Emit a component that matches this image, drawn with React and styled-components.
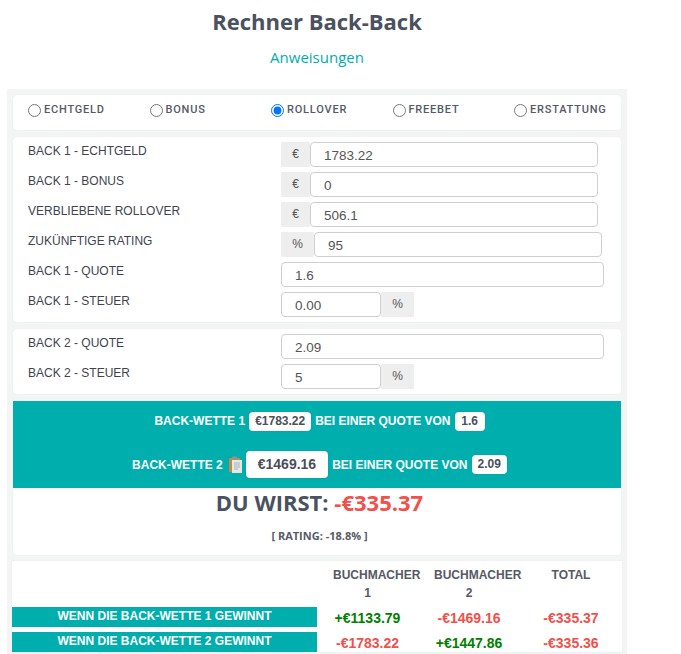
import React from 'react';
import styled, { createGlobalStyle } from 'styled-components';

const GlobalStyle = createGlobalStyle`
  html, body {
    margin: 0;
    padding: 0;
    background: #fff;
    overflow: hidden;
  }
  body {
    font-family: 'Liberation Sans', Arial, sans-serif;
  }
`;

const TEAL = '#00aeae';

const Page = styled.div`
  width: 681px;
  height: 654px;
  overflow: hidden;
`;

const Header = styled.header`
  width: 634px;
  text-align: center;
  padding-top: 5px;
  height: 89px;
  box-sizing: border-box;
`;

const Title = styled.h1`
  margin: 0;
  font: 700 22px/32px 'Open Sans', sans-serif;
  color: #4a5160;
`;

const Instructions = styled.a`
  display: block;
  margin-top: 10px;
  font: 400 15px/20px 'Open Sans', sans-serif;
  color: ${TEAL};
`;

const Panel = styled.main`
  width: 620px;
  margin-left: 7px;
  padding: 6px 6px 2px;
  box-sizing: border-box;
  background: #f3f4f4;
  display: flex;
  flex-direction: column;
  gap: 7px;
`;

const Card = styled.section`
  background: #fff;
  border-radius: 4px;
  box-shadow: 0 0 1px rgba(0, 0, 0, 0.08);
`;

const RadioCard = styled(Card)`
  height: 35px;
  display: grid;
  grid-template-columns: repeat(5, 121.5px);
  padding-left: 15px;
  align-items: center;
`;

const RadioLabel = styled.label`
  display: flex;
  align-items: center;
  gap: 3px;
  font: 500 11px/14px 'Roboto', sans-serif;
  letter-spacing: 0.8px;
  color: #555a64;
  margin-top: -5px;
`;

const Radio = styled.input`
  width: 13px;
  height: 13px;
  margin: 0;
  accent-color: #0075ff;
`;

const FieldCard = styled(Card)`
  padding: 5px 0 5px 15px;
  display: flex;
  flex-direction: column;
  gap: 5px;
`;

const Row = styled.div`
  display: flex;
  height: 25px;
`;

const Label = styled.div`
  width: 253px;
  font-size: 12px;
  line-height: 14px;
  color: #3f4450;
  padding-top: 2px;
`;

const Control = styled.div`
  display: flex;
  width: ${(p) => p.$width}px;
`;

const Addon = styled.span`
  width: ${(p) => p.$width}px;
  flex: none;
  box-sizing: border-box;
  background: #eeeeee;
  color: #555;
  font-size: 12px;
  line-height: 25px;
  text-align: center;
  border-radius: 1px;
`;

const Input = styled.input`
  flex: 1;
  min-width: 0;
  height: 25px;
  box-sizing: border-box;
  margin: 0;
  padding: 1px 0 0 13px;
  border: 1px solid #cfcfcf;
  border-radius: 4px;
  font: 13.5px 'Liberation Sans', Arial, sans-serif;
  color: #555;
  background: #fff;
  outline: none;
`;

const ResultCard = styled(Card)`
  height: 154px;
  margin-bottom: -1px;
  text-align: center;
`;

const Banner = styled.div`
  height: 87px;
  background: ${TEAL};
  color: #fff;
  font-size: 12px;
  font-weight: 700;
  display: flex;
  flex-direction: column;
`;

const BetLine = styled.div`
  height: ${(p) => p.$height}px;
  padding-left: 5px;
  display: flex;
  align-items: center;
  justify-content: center;
  gap: 4px;
`;

const Chip = styled.span`
  box-sizing: border-box;
  background: #fff;
  color: #4a4f5a;
  border-radius: 4px;
  padding: 0 ${(p) => (p.$big ? 12 : 6)}px;
  min-width: 30px;
  font-size: ${(p) => (p.$big ? 14 : 12)}px;
  line-height: ${(p) => (p.$big ? 27 : 19)}px;
  box-shadow: 0 0 1px rgba(0, 0, 0, 0.2);
`;

const Outcome = styled.div`
  font: 700 22px/30px 'Open Sans', sans-serif;
  color: #4a5160;
  margin-top: -1px;
  padding-left: 5px;
`;

const Negative = styled.span`
  color: #f2504b;
`;

const Rating = styled.div`
  font: 700 11px/14px 'Open Sans', sans-serif;
  color: #565b66;
  margin-top: 12px;
  padding-left: 5px;
`;

const TableCard = styled(Card)`
  border-radius: 0;
  height: 91px;
  margin: 0 -1px;
  display: grid;
  grid-template-columns: 305px 101px 102px 102px;
  grid-template-rows: 46px 20px 5px 20px;
  text-align: center;
`;

const HeadCell = styled.div`
  padding: 5px 16px 0;
  min-width: 0;
  font-size: 12px;
  font-weight: 700;
  line-height: 18px;
  color: #555a64;
`;

const WinLabel = styled.div`
  grid-column: 1;
  background: ${TEAL};
  color: #fff;
  font-size: 12px;
  font-weight: 700;
  line-height: 18px;
`;

const Amount = styled.div`
  font-size: 14px;
  font-weight: 700;
  line-height: 20px;
  padding-top: 1px;
  color: ${(p) => (p.$win ? '#008000' : '#f2504b')};
`;

const RowGap = styled.div`
  grid-column: 1 / -1;
`;

const ClipSvg = styled.svg`
  margin-left: 2px;
  flex: none;
`;

const ClipboardIcon = () => (
  <ClipSvg width="13" height="17" viewBox="0 0 13 17" aria-hidden="true">
    <rect x="0" y="2" width="11" height="14" rx="1" fill="#c08a50" />
    <rect x="3" y="0.5" width="5" height="3" rx="0.8" fill="#8f9496" />
    <rect x="3" y="4" width="10" height="13" fill="#e6e8e8" />
    <path d="M5 7h6M5 9h6M5 11h6M5 13h4" stroke="#aeb2b4" strokeWidth="1" />
  </ClipSvg>
);

const RADIOS = ['ECHTGELD', 'BONUS', 'ROLLOVER', 'FREEBET', 'ERSTATTUNG'];

const App = () => (
  <Page>
    <GlobalStyle />
    <Header>
      <Title>Rechner Back-Back</Title>
      <Instructions>Anweisungen</Instructions>
    </Header>
    <Panel>
      <RadioCard>
        {RADIOS.map((name) => (
          <RadioLabel key={name}>
            <Radio type="radio" name="mode" defaultChecked={name === 'ROLLOVER'} />
            {name}
          </RadioLabel>
        ))}
      </RadioCard>

      <FieldCard>
        <Row>
          <Label>BACK 1 - ECHTGELD</Label>
          <Control $width={317}>
            <Addon $width={29}>€</Addon>
            <Input defaultValue="1783.22" />
          </Control>
        </Row>
        <Row>
          <Label>BACK 1 - BONUS</Label>
          <Control $width={317}>
            <Addon $width={29}>€</Addon>
            <Input defaultValue="0" />
          </Control>
        </Row>
        <Row>
          <Label>VERBLIEBENE ROLLOVER</Label>
          <Control $width={317}>
            <Addon $width={29}>€</Addon>
            <Input defaultValue="506.1" />
          </Control>
        </Row>
        <Row>
          <Label>ZUKÜNFTIGE RATING</Label>
          <Control $width={321}>
            <Addon $width={33}>%</Addon>
            <Input defaultValue="95" />
          </Control>
        </Row>
        <Row>
          <Label>BACK 1 - QUOTE</Label>
          <Control $width={323}>
            <Input defaultValue="1.6" />
          </Control>
        </Row>
        <Row>
          <Label>BACK 1 - STEUER</Label>
          <Control $width={133}>
            <Input defaultValue="0.00" />
            <Addon $width={33}>%</Addon>
          </Control>
        </Row>
      </FieldCard>

      <FieldCard>
        <Row>
          <Label>BACK 2 - QUOTE</Label>
          <Control $width={323}>
            <Input defaultValue="2.09" />
          </Control>
        </Row>
        <Row>
          <Label>BACK 2 - STEUER</Label>
          <Control $width={133}>
            <Input defaultValue="5" />
            <Addon $width={33}>%</Addon>
          </Control>
        </Row>
      </FieldCard>

      <ResultCard>
        <Banner>
          <BetLine $height={40}>
            BACK-WETTE 1 <Chip>€1783.22</Chip> BEI EINER QUOTE VON <Chip>1.6</Chip>
          </BetLine>
          <BetLine $height={47}>
            BACK-WETTE 2 <ClipboardIcon /> <Chip $big>€1469.16</Chip> BEI EINER QUOTE VON <Chip>2.09</Chip>
          </BetLine>
        </Banner>
        <Outcome>
          DU WIRST: <Negative>-€335.37</Negative>
        </Outcome>
        <Rating>[ RATING: -18.8% ]</Rating>
      </ResultCard>

      <TableCard>
        <div />
        <HeadCell>BUCHMACHER 1</HeadCell>
        <HeadCell>BUCHMACHER 2</HeadCell>
        <HeadCell>TOTAL</HeadCell>
        <WinLabel>WENN DIE BACK-WETTE 1 GEWINNT</WinLabel>
        <Amount $win>+€1133.79</Amount>
        <Amount>-€1469.16</Amount>
        <Amount>-€335.37</Amount>
        <RowGap />
        <WinLabel>WENN DIE BACK-WETTE 2 GEWINNT</WinLabel>
        <Amount>-€1783.22</Amount>
        <Amount $win>+€1447.86</Amount>
        <Amount>-€335.36</Amount>
      </TableCard>
    </Panel>
  </Page>
);

export default App;
